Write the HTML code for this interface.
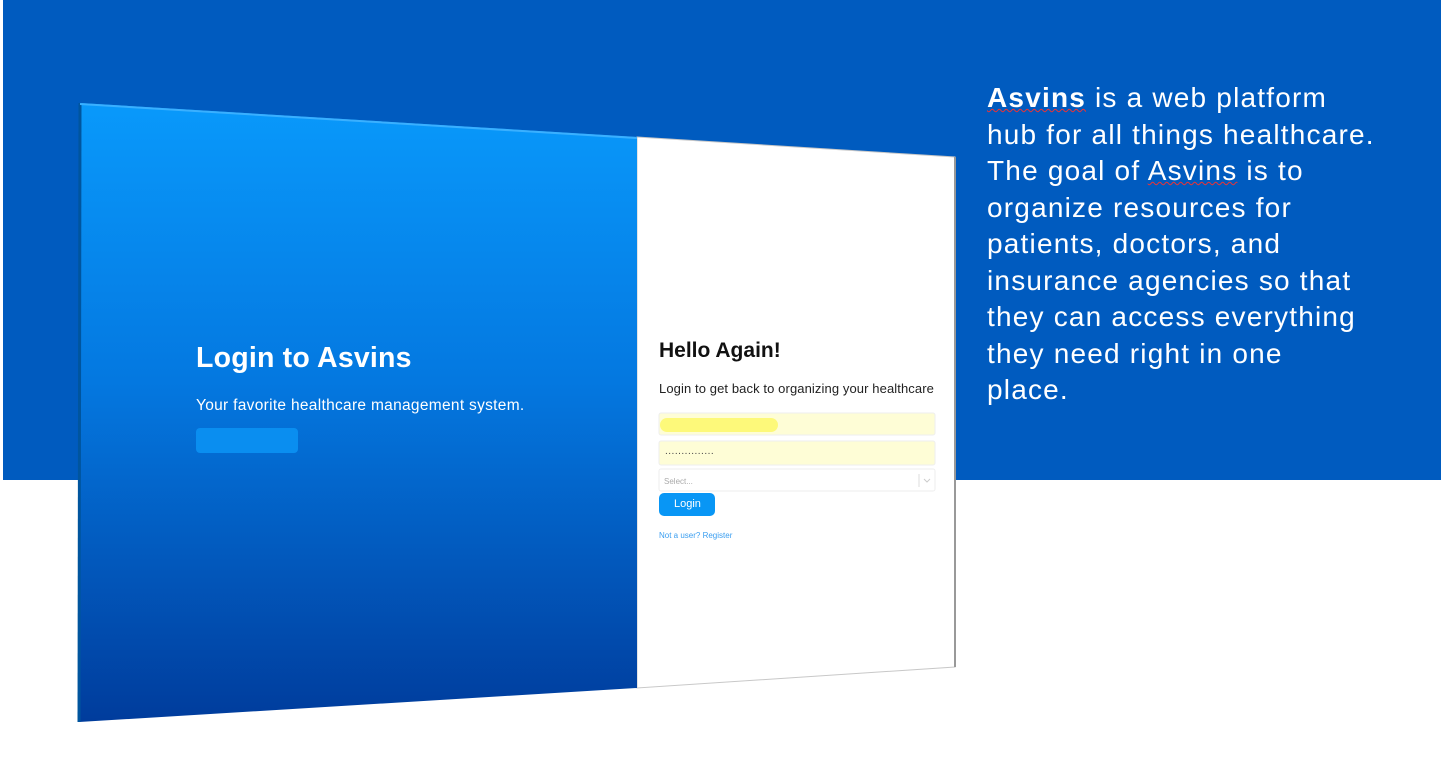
<!DOCTYPE html>
<html><head><meta charset="utf-8"><style>
body{margin:0;width:1441px;height:771px;position:relative;overflow:hidden;background:#fff;font-family:"Liberation Sans",sans-serif}
.band{position:absolute;left:3px;top:0;width:1438px;height:480px;background:#005bbf}
.t{position:absolute;white-space:nowrap}
</style></head><body>
<div class="band"></div>
<svg style="position:absolute;left:0;top:0" width="1441" height="771">
<defs>
<linearGradient id="g" x1="0" y1="0" x2="0" y2="1">
<stop offset="0" stop-color="#0999fb"/><stop offset="0.45" stop-color="#0478e0"/><stop offset="1" stop-color="#003c9c"/>
</linearGradient>
</defs>
<polygon points="637,137 955,157 955,667 637,688" fill="#fff" stroke="#c8c8c8" stroke-width="1"/>
<line x1="955" y1="157" x2="955" y2="667" stroke="#999" stroke-width="2"/>
<polygon points="80,103 637,137 637,688 79,722" fill="url(#g)"/>
<line x1="80" y1="103" x2="79" y2="722" stroke="#00559e" stroke-width="3"/>
<line x1="80" y1="104" x2="637" y2="138" stroke="#3ab0ff" stroke-width="2"/>
<rect x="196" y="428" width="102" height="25" rx="4" fill="#0a8ef0"/>
<rect x="659" y="413" width="276" height="22" rx="2" fill="#fefdd6" stroke="#eee"/>
<rect x="660" y="418" width="118" height="14" rx="7" fill="#fdf97a"/>
<rect x="659" y="441" width="276" height="24" rx="2" fill="#fefdd6" stroke="#eee"/>
<rect x="659" y="469" width="276" height="22" rx="2" fill="#fff" stroke="#eee"/>
<line x1="919" y1="474" x2="919" y2="487" stroke="#ddd"/>
<path d="M924 479 l3 3 l3 -3" fill="none" stroke="#ccc"/>
<rect x="659" y="493" width="56" height="23" rx="5" fill="#0896f5"/>
</svg>
<div class="t" style="left:196px;top:342px;font-size:28.5px;font-weight:bold;color:#fff;letter-spacing:0.2px">Login to Asvins</div>
<div class="t" style="left:196px;top:397px;font-size:15.5px;color:#fff;letter-spacing:0.3px">Your favorite healthcare management system.</div>
<div class="t" style="left:659px;top:339px;font-size:21px;font-weight:bold;color:#111">Hello Again!</div>
<div class="t" style="left:659px;top:381px;font-size:13px;color:#222;letter-spacing:0.1px">Login to get back to organizing your healthcare</div>
<div class="t" style="left:665px;top:446px;font-size:10px;color:#444;letter-spacing:0.5px">...............</div>
<div class="t" style="left:664px;top:477px;font-size:8px;color:#aaa">Select...</div>
<div class="t" style="left:674px;top:498px;font-size:11px;color:#fff">Login</div>
<div class="t" style="left:659px;top:531px;font-size:8px;color:#3a9ef0">Not a user? Register</div>
<div class="t" style="left:987px;top:80px;font-size:28px;line-height:36.5px;color:#fff;letter-spacing:1.2px"><b style="text-decoration:underline wavy #e33;text-decoration-thickness:1px">Asvins</b> is a web platform<br>hub for all things healthcare.<br>The goal of <span style="text-decoration:underline wavy #e33;text-decoration-thickness:1px">Asvins</span> is to<br>organize resources for<br>patients, doctors, and<br>insurance agencies so that<br>they can access everything<br>they need right in one<br>place.</div>
</body></html>
